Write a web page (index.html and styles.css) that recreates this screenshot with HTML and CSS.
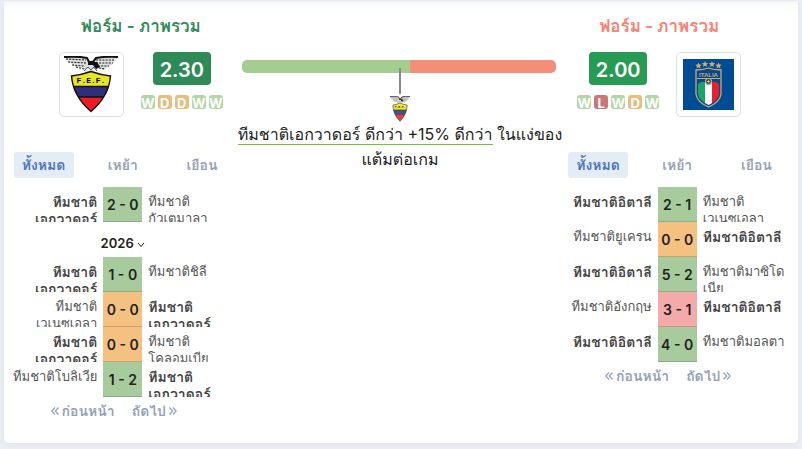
FILE: index.html
```html
<!DOCTYPE html>
<html lang="th">
<head>
<meta charset="utf-8">
<meta name="viewport" content="width=device-width, initial-scale=1">
<title>ฟอร์ม - ภาพรวม</title>
<link rel="stylesheet" href="styles.css">
</head>
<body>
<svg class="defs" aria-hidden="true">
  <symbol id="crest-ecuador" viewBox="0 0 54 57" preserveAspectRatio="none">
    <path d="M0 1 Q13 0 24 2 L26 5 L31 2 Q42 0 54 1 L51 5 L48 9 L44 11 L39 14 L35 12 L30 16 L21 16 L19 12 L12 11 L8 8 L3 4Z" fill="#ddd"/>
    <path d="M2 3 L22 4 M4 6 L22 7 M8 9 L20 10 M12 11 L20 13 M32 4 L51 4 M32 7 L49 7 M34 10 L45 10 M35 12 L41 13" stroke="#222" stroke-width="1.1" stroke-dasharray="2 1.2" fill="none"/>
    <path d="M0 1 Q14 0 23 2 L25 6 H29 L32 2 Q42 0 54 1" stroke="#111" stroke-width="2" fill="none"/>
    <path d="M24 6 H33 L36 11 L32 13 L29 9 L24 9Z" fill="#111"/>
    <path d="M20 15 L24 11 L27 14 L30 11 L33 15" stroke="#555" stroke-width="1" fill="#eee"/>
    <path d="M7.500 20 Q17 19 27 15.500 Q37 19 46.500 20 Q45 40 27 55.500 Q9 40 7.500 20Z" fill="#e9e51f"/>
    <path d="M9 30.500 H45 Q43 37 40 41 H14 Q11 37 9 30.500Z" fill="#302d7b"/>
    <path d="M14 41 H40 Q35 49 27 55.500 Q19 49 14 41Z" fill="#ed1c24"/>
    <path d="M9 30.500 H45 M14 41 H40 M7.500 20 Q17 19 27 15.500 Q37 19 46.500 20 Q45 40 27 55.500 Q9 40 7.500 20Z" fill="none" stroke="#111" stroke-width="1.400"/>
    <text x="27" y="27" text-anchor="middle" class="crest-letters">F.E.F.</text>
  </symbol>
  <symbol id="chevron" viewBox="0 0 8 6"><path d="M1 1 L4 4.500 L7 1" fill="none" stroke="currentColor"/></symbol>
  <symbol id="angles-left" viewBox="0 0 8 8"><path d="M4 .5 L.8 4 L4 7.500 M7.500 .5 L4.300 4 L7.500 7.500" fill="none" stroke="currentColor" stroke-width="1.200"/></symbol>
  <symbol id="angles-right" viewBox="0 0 8 8"><path d="M.5 .5 L3.700 4 L.5 7.500 M4 .5 L7.200 4 L4 7.500" fill="none" stroke="currentColor" stroke-width="1.200"/></symbol>
</svg>
<main class="card">
  <section class="team team-home">
    <header class="summary">
      <h2 class="title">ฟอร์ม - ภาพรวม</h2>
      <div class="overview">
        <div class="logo"><svg class="logo-ecuador" role="img" aria-label="ทีมชาติเอกวาดอร์"><use href="#crest-ecuador"/></svg></div>
        <div class="stats">
          <strong class="rating">2.30</strong>
          <div class="form"><span class="badge win">W</span><span class="badge draw">D</span><span class="badge draw">D</span><span class="badge win">W</span><span class="badge win">W</span></div>
        </div>
      </div>
    </header>
    <nav class="tabs"><button class="tab active">ทั้งหมด</button><button class="tab">เหย้า</button><button class="tab">เยือน</button></nav>
    <table class="matches">
      <tbody>
        <tr><td class="name home own"><div>ทีมชาติ<br>เอกวาดอร์</div></td><td class="score green">2 - 0</td><td class="name away"><div>ทีมชาติ<br>กัวเตมาลา</div></td></tr>
        <tr><td class="season" colspan="3"><button class="year">2026 <svg class="chevron"><use href="#chevron"/></svg></button></td></tr>
        <tr><td class="name home own"><div>ทีมชาติ<br>เอกวาดอร์</div></td><td class="score green">1 - 0</td><td class="name away"><div>ทีมชาติชิลี</div></td></tr>
        <tr><td class="name home"><div>ทีมชาติ<br>เวเนซุเอลา</div></td><td class="score orange">0 - 0</td><td class="name away own"><div>ทีมชาติ<br>เอกวาดอร์</div></td></tr>
        <tr><td class="name home own"><div>ทีมชาติ<br>เอกวาดอร์</div></td><td class="score orange">0 - 0</td><td class="name away"><div>ทีมชาติ<br>โคลอมเบีย</div></td></tr>
        <tr><td class="name home"><div>ทีมชาติโบลิเวีย</div></td><td class="score green">1 - 2</td><td class="name away own"><div>ทีมชาติ<br>เอกวาดอร์</div></td></tr>
      </tbody>
    </table>
    <nav class="pager"><a href="#"><svg class="angles"><use href="#angles-left"/></svg>ก่อนหน้า</a><a href="#">ถัดไป<svg class="angles"><use href="#angles-right"/></svg></a></nav>
  </section>

  <section class="compare">
    <div class="bar"><span class="bar-home"></span><span class="bar-away"></span></div>
    <div class="marker"><span class="needle"></span><svg class="mini-crest"><use href="#crest-ecuador"/></svg></div>
    <p class="verdict"><span class="lead">ทีมชาติเอกวาดอร์ ดีกว่า +15% ดีกว่า</span> ในแง่ของ<br>แต้มต่อเกม</p>
  </section>

  <section class="team team-away">
    <header class="summary">
      <h2 class="title">ฟอร์ม - ภาพรวม</h2>
      <div class="overview">
        <div class="stats">
          <strong class="rating">2.00</strong>
          <div class="form"><span class="badge win">W</span><span class="badge loss">L</span><span class="badge win">W</span><span class="badge draw">D</span><span class="badge win">W</span></div>
        </div>
        <div class="logo">
          <svg class="logo-italy" viewBox="0 0 51 51" role="img" aria-label="ทีมชาติอิตาลี">
            <rect width="51" height="51" fill="#004c94"/>
            <g fill="#c9ad75">
              <path id="star" d="M15.500 3.500 l.9 2.100 2.300 .2 -1.700 1.500 .5 2.200 -2 -1.200 -2 1.200 .5 -2.200 -1.700 -1.500 2.300 -.2z"/>
              <use href="#star" x="6.500" y="-1.500"/><use href="#star" x="13.500" y="-1.500"/><use href="#star" x="20" y="0"/>
            </g>
            <path d="M13 11 Q20 11 25.500 9 Q31 11 38 11 V35 Q37 43 25.500 48 Q14 43 13 35Z" fill="#0a4788" stroke="#c9ad75" stroke-width="1.300"/>
            <path d="M15 25 Q18 22 22 23 V44 Q16 41 15 35Z" fill="#1ca568"/>
            <path d="M22 23 H29 V44 L25.500 46 L22 44Z" fill="#fff"/>
            <path d="M29 23 Q33 22 36 25 V35 Q35 41 29 44Z" fill="#e8202e"/>
            <path d="M14 19.500 H37" stroke="#c9ad75"/>
            <circle cx="25.500" cy="22.500" r="3" fill="#0a4788" stroke="#c9ad75" stroke-width="1.200"/>
            <path d="M24 22.500 H27 M25.500 21 V24" stroke="#c9ad75"/>
            <text x="25.500" y="18" text-anchor="middle" class="italy-letters">ITALIA</text>
          </svg>
        </div>
      </div>
    </header>
    <nav class="tabs"><button class="tab active">ทั้งหมด</button><button class="tab">เหย้า</button><button class="tab">เยือน</button></nav>
    <table class="matches">
      <tbody>
        <tr><td class="name home own"><div>ทีมชาติอิตาลี</div></td><td class="score green">2 - 1</td><td class="name away"><div>ทีมชาติ<br>เวเนซุเอลา</div></td></tr>
        <tr><td class="name home"><div>ทีมชาติยูเครน</div></td><td class="score orange">0 - 0</td><td class="name away own"><div>ทีมชาติอิตาลี</div></td></tr>
        <tr><td class="name home own"><div>ทีมชาติอิตาลี</div></td><td class="score green">5 - 2</td><td class="name away"><div>ทีมชาติมาซิโด<br>เนีย</div></td></tr>
        <tr><td class="name home"><div>ทีมชาติอังกฤษ</div></td><td class="score red">3 - 1</td><td class="name away own"><div>ทีมชาติอิตาลี</div></td></tr>
        <tr><td class="name home own"><div>ทีมชาติอิตาลี</div></td><td class="score green">4 - 0</td><td class="name away"><div>ทีมชาติมอลตา</div></td></tr>
      </tbody>
    </table>
    <nav class="pager"><a href="#"><svg class="angles"><use href="#angles-left"/></svg>ก่อนหน้า</a><a href="#">ถัดไป<svg class="angles"><use href="#angles-right"/></svg></a></nav>
  </section>
</main>
</body>
</html>
```
FILE: styles.css
```css
* { box-sizing: border-box; }
body {
  margin: 0;
  padding: 0 4px 6px;
  background: #ebeff4;
  color: #222;
  font-family: Inter, "Leelawadee UI", Tahoma, Loma, Waree, "Noto Sans Thai Looped", "Noto Looped Thai", sans-serif;
  font-size: 14px;
}
button { border: 0; background: none; font: inherit; color: inherit; padding: 0; }
.defs { display: none; }
.card {
  display: grid;
  grid-template-columns: minmax(0, 3fr) minmax(0, 4fr) minmax(0, 3fr);
  padding: 12px 2px 20px 0;
  min-height: 443px;
  border-radius: 0 0 5px 5px;
  background: linear-gradient(#e4e6ee, #f8f9fa 2px, #fff 14px);
  box-shadow: 0 2px 6px #dfe4ec;
}
.team { min-width: 0; }
.team-home .summary { padding-left: 36px; }
.team-away .summary { padding-right: 36px; }
.title { margin: 0 0 12px; font-size: 17px; line-height: 28px; font-weight: 600; text-align: center; color: #2e8b57; }
.team-away .title { color: #fa8072; }
.overview { display: flex; justify-content: center; gap: 17px; }
.logo { display: grid; place-items: center; width: 65px; height: 65px; border: 1px solid #dddfe9; border-radius: 5px; background: #fff; }
.logo-ecuador { width: 54px; height: 57px; }
.logo-italy { width: 51px; height: 51px; }
.crest-letters { font: bold 8px "Liberation Mono", monospace; }
.italy-letters { font: bold 6px "Liberation Sans", sans-serif; fill: #c9ad75; }
.stats { display: flex; flex-direction: column; align-items: center; gap: 10px; }
.rating { width: 58px; border-radius: 4px; background: #2e8b57; color: #fff; font-size: 20px; line-height: 33px; padding-top: 2px; height: 33px; text-align: center; font-weight: 600; }
.team-away .rating { background: #279b53; }
.form { display: flex; gap: 3px; }
.badge { width: 14px; height: 14px; border-radius: 3px; color: #fff; font-size: 13px; line-height: 16px; font-weight: 700; display: flex; justify-content: center; }
.win { background: #b3d6a5; }
.draw { background: #e8bd7d; }
.loss { background: #c97878; }
.tabs { display: grid; grid-template-columns: repeat(3, 1fr); justify-items: center; margin: 35px 0 9px; }
.tab { width: 60px; height: 26px; border-radius: 3px; font-size: 14px; font-weight: 600; color: #94a0b6; }
.tab.active { background: #e4ecf6; color: #4c75bd; }
.matches { width: 100%; table-layout: fixed; border-collapse: separate; border-spacing: 0; }
.matches tr { height: 35px; }
.matches td { padding: 0; }
.name { color: #555; vertical-align: top; }
.name div { height: 35px; padding-top: 6px; overflow: hidden; line-height: 17px; font-size: 13px; white-space: nowrap; }
.home { text-align: right; }
.home div { padding-right: 6px; }
.away div { padding-left: 6px; }
.own { font-weight: 600; color: #444; }
.own div { font-size: 14px; }
.matches .score { width: 39px; height: 35px; text-align: center; font-weight: 600; border-bottom: 1px solid #8cae86; }
.green { background: #a7cb9d; }
.matches .orange { background: #f5c180; border-color: #cca26e; }
.matches .red { background: #f5aaaa; border-color: #cc9090; }
.season { text-align: center; }
.year { font-size: 13px; font-weight: 600; padding-top: 7px; }
.chevron { width: 8px; height: 6px; }
.pager { display: flex; justify-content: center; gap: 17px; padding: 4px 18px 0 0; }
.pager a { display: flex; align-items: center; gap: 3px; color: #94a0b6; font-size: 14px; line-height: 20px; font-weight: 600; text-decoration: none; }
.angles { width: 8px; height: 8px; }
.compare { padding-top: 48px; }
.bar { display: flex; height: 13px; margin-right: 2px; border-radius: 5px; overflow: hidden; }
.bar-home { flex: 535; background: #a3ce90; }
.bar-away { flex: 465; background: #f68d77; }
.marker { position: relative; display: flex; flex-direction: column; align-items: center; gap: 2px; margin-top: -5px; }
.needle { width: 2px; height: 26px; background: #888; }
.mini-crest { width: 20px; height: 26px; opacity: .85; }
.verdict { margin: 0 -8px; font-size: 16px; line-height: 25px; text-align: center; white-space: nowrap; }
.lead { border-bottom: 1px solid #72bf44; }
```
